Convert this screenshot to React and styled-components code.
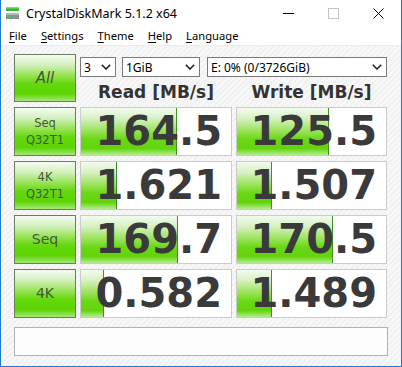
import React from 'react';
import styled, { createGlobalStyle } from 'styled-components';

const GlobalStyle = createGlobalStyle`
  html, body {
    margin: 0;
    padding: 0;
    background: #ffffff;
  }
  * {
    box-sizing: border-box;
  }
`;

const Window = styled.div`
  width: 402px;
  height: 367px;
  border: 1px solid #1c7ad4;
  border-top: none;
  background: #ffffff;
  display: flex;
  flex-direction: column;
  overflow: hidden;
  font-family: 'Noto Sans', 'Open Sans', sans-serif;
`;

const TitleBar = styled.div`
  height: 26px;
  display: flex;
  align-items: center;
  padding-left: 4px;
`;

const TitleText = styled.span`
  font-size: 12.5px;
  color: #000000;
  margin-left: 6px;
`;

const TitleButtons = styled.div`
  margin-left: auto;
  display: flex;
  height: 100%;
`;

const TitleButton = styled.div`
  width: 45px;
  height: 100%;
  display: flex;
  align-items: center;
  justify-content: center;
`;

const MenuBar = styled.div`
  height: 20px;
  display: flex;
  align-items: center;
  padding-left: 1px;
  border-bottom: 1px solid #ececec;
`;

const MenuItem = styled.span`
  font-size: 11.2px;
  color: #000000;
  padding: 0 7px;
  line-height: 20px;

  u {
    text-decoration: underline;
    text-underline-offset: 2px;
  }
`;

const Client = styled.div`
  flex: 1;
  padding: 8px 13px 0 13px;
  background-color: #f3f3f3;
  background-image: repeating-linear-gradient(
    135deg,
    #f1f1f1 0px,
    #f1f1f1 2px,
    #f8f8f8 2px,
    #f8f8f8 4px
  );
`;

const Grid = styled.div`
  display: grid;
  grid-template-columns: 62px 152px 151px;
  grid-template-rows: 48px repeat(4, 49px);
  column-gap: 4px;
  row-gap: 5px;
`;

const GreenButton = styled.div`
  border: 1px solid #6b7d66;
  background: linear-gradient(
    to bottom,
    #f6fbf3 0%,
    #d2f0bc 22%,
    #96e252 45%,
    #64d80e 62%,
    #5cd400 84%,
    #a4e87a 100%
  );
  display: flex;
  flex-direction: column;
  align-items: center;
  justify-content: center;
  font-family: 'DejaVu Sans', Verdana, sans-serif;
  font-size: ${p => (p.$big ? '15px' : p.$single ? '14px' : '11.5px')};
  font-style: ${p => (p.$big ? 'italic' : 'normal')};
  line-height: 17px;
  color: #3f5a36;
`;

const HeaderArea = styled.div`
  grid-column: 2 / 4;
  display: flex;
  flex-direction: column;
  padding-top: 3px;
`;

const SelectRow = styled.div`
  display: flex;
  height: 20px;
`;

const SelectBox = styled.div`
  width: ${p => p.$w}px;
  margin-left: ${p => p.$ml || 0}px;
  height: 20px;
  border: 1px solid #7a7a7a;
  background: #ffffff;
  display: flex;
  align-items: center;
  padding: 0 4px 0 3px;
  font-size: 12px;
  color: #000000;
`;

const SelectLabel = styled.span`
  flex: 1;
  white-space: nowrap;
`;

const Titles = styled.div`
  display: grid;
  grid-template-columns: 152px 151px;
  column-gap: 4px;
  margin-top: 5px;
`;

const ColumnTitle = styled.div`
  text-align: center;
  font-family: 'DejaVu Sans', Verdana, sans-serif;
  font-weight: bold;
  font-size: 17px;
  line-height: 20px;
  color: #333333;
`;

const ScoreCell = styled.div`
  position: relative;
  border: 1px solid #cbcbcb;
  background: #ffffff;
  overflow: hidden;
`;

const Meter = styled.div`
  position: absolute;
  left: 0;
  top: 0;
  bottom: 0;
  border-right: 1px solid #3f8f22;
  background: linear-gradient(
    to bottom,
    #f4fbf0 0%,
    #d6f1c4 22%,
    #9ce35c 48%,
    #6ad816 66%,
    #62d40a 86%,
    #b4eb92 100%
  );
`;

const ScoreText = styled.div`
  position: relative;
  text-align: right;
  padding-right: 9px;
  font-family: 'DejaVu Sans', Verdana, sans-serif;
  font-weight: bold;
  font-size: 40px;
  line-height: 47px;
  color: #3a3a3a;
`;

const Comment = styled.div`
  margin-top: 9px;
  height: 29px;
  border: 1px solid #b2b2b2;
  background: #fdfdfd;
`;

const Chevron = () => (
  <svg width="10" height="6" viewBox="0 0 10 6">
    <path d="M0.8 0.8 L5 5 L9.2 0.8" fill="none" stroke="#222" strokeWidth="1.6" />
  </svg>
);

const AppIcon = () => (
  <svg width="15" height="14" viewBox="0 0 15 14">
    <rect x="1" y="1" width="13" height="4" fill="#35b82c" />
    <rect x="1" y="1" width="13" height="1.5" fill="#7ee070" />
    <rect x="1" y="7" width="13" height="6" fill="#8a8f96" />
    <rect x="1" y="7" width="13" height="2" fill="#b6bac0" />
    <rect x="3" y="9.5" width="3" height="1.5" fill="#3fd040" />
  </svg>
);

const rows = [
  { label: ['Seq', 'Q32T1'], read: '164.5', write: '125.5' },
  { label: ['4K', 'Q32T1'], read: '1.621', write: '1.507' },
  { label: ['Seq'], read: '169.7', write: '170.5' },
  { label: ['4K'], read: '0.582', write: '1.489' },
];

const meterWidth = (value) => {
  const v = Math.log10(parseFloat(value) * 10) / 5;
  return `${Math.max(0, Math.min(1, v)) * 100}%`;
};

const Score = ({ value }) => (
  <ScoreCell>
    <Meter style={{ width: meterWidth(value) }} />
    <ScoreText>{value}</ScoreText>
  </ScoreCell>
);

const App = () => {
  return (
    <>
      <GlobalStyle />
      <Window>
        <TitleBar>
          <AppIcon />
          <TitleText>CrystalDiskMark 5.1.2 x64</TitleText>
          <TitleButtons>
            <TitleButton>
              <svg width="11" height="11" viewBox="0 0 11 11">
                <path d="M0 5.5 H11" stroke="#000" strokeWidth="1" />
              </svg>
            </TitleButton>
            <TitleButton>
              <svg width="11" height="11" viewBox="0 0 11 11">
                <rect x="0.5" y="0.5" width="10" height="10" fill="none" stroke="#c4c4c4" />
              </svg>
            </TitleButton>
            <TitleButton>
              <svg width="11" height="11" viewBox="0 0 11 11">
                <path d="M0.5 0.5 L10.5 10.5 M10.5 0.5 L0.5 10.5" stroke="#000" strokeWidth="1" />
              </svg>
            </TitleButton>
          </TitleButtons>
        </TitleBar>
        <MenuBar>
          <MenuItem><u>F</u>ile</MenuItem>
          <MenuItem><u>S</u>ettings</MenuItem>
          <MenuItem><u>T</u>heme</MenuItem>
          <MenuItem><u>H</u>elp</MenuItem>
          <MenuItem><u>L</u>anguage</MenuItem>
        </MenuBar>
        <Client>
          <Grid>
            <GreenButton $big>All</GreenButton>
            <HeaderArea>
              <SelectRow>
                <SelectBox $w={36}>
                  <SelectLabel>3</SelectLabel>
                  <Chevron />
                </SelectBox>
                <SelectBox $w={78} $ml={6}>
                  <SelectLabel>1GiB</SelectLabel>
                  <Chevron />
                </SelectBox>
                <SelectBox $w={180} $ml={7}>
                  <SelectLabel>E: 0% (0/3726GiB)</SelectLabel>
                  <Chevron />
                </SelectBox>
              </SelectRow>
              <Titles>
                <ColumnTitle>Read [MB/s]</ColumnTitle>
                <ColumnTitle>Write [MB/s]</ColumnTitle>
              </Titles>
            </HeaderArea>
            {rows.map((r) => (
              <React.Fragment key={r.label.join('-')}>
                <GreenButton $single={r.label.length === 1}>
                  {r.label.map((l) => (
                    <span key={l}>{l}</span>
                  ))}
                </GreenButton>
                <Score value={r.read} />
                <Score value={r.write} />
              </React.Fragment>
            ))}
          </Grid>
          <Comment />
        </Client>
      </Window>
    </>
  );
};

export default App;
